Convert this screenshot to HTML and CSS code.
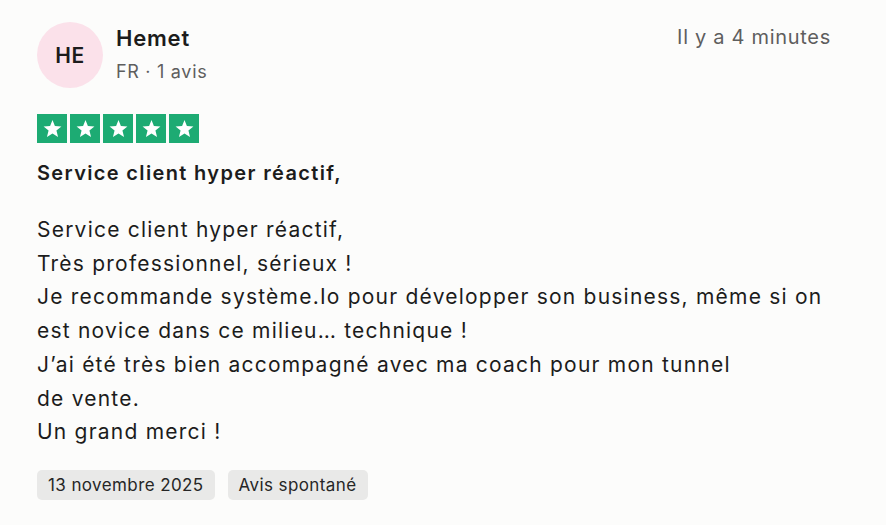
FILE: index.html
```html
<!DOCTYPE html>
<html lang="fr">
<head>
  <meta charset="UTF-8">
  <title>Avis - Hemet</title>
  <link rel="stylesheet" href="styles.css">
</head>
<body>
  <article class="review">
    <header class="review-head">
      <div class="author">
        <div class="avatar">HE</div>
        <div class="author-info">
          <div class="author-name">Hemet</div>
          <div class="author-meta">FR · 1 avis</div>
        </div>
      </div>
      <time class="review-age">Il y a 4 minutes</time>
    </header>

    <div class="stars">
      <span class="star"><svg viewBox="0 0 24 24"><path d="M12 3.2l2.5 6.3 6.8.4-5.2 4.3 1.7 6.6L12 17.1l-5.8 3.7 1.7-6.6-5.2-4.3 6.8-.4z"/></svg></span>
      <span class="star"><svg viewBox="0 0 24 24"><path d="M12 3.2l2.5 6.3 6.8.4-5.2 4.3 1.7 6.6L12 17.1l-5.8 3.7 1.7-6.6-5.2-4.3 6.8-.4z"/></svg></span>
      <span class="star"><svg viewBox="0 0 24 24"><path d="M12 3.2l2.5 6.3 6.8.4-5.2 4.3 1.7 6.6L12 17.1l-5.8 3.7 1.7-6.6-5.2-4.3 6.8-.4z"/></svg></span>
      <span class="star"><svg viewBox="0 0 24 24"><path d="M12 3.2l2.5 6.3 6.8.4-5.2 4.3 1.7 6.6L12 17.1l-5.8 3.7 1.7-6.6-5.2-4.3 6.8-.4z"/></svg></span>
      <span class="star"><svg viewBox="0 0 24 24"><path d="M12 3.2l2.5 6.3 6.8.4-5.2 4.3 1.7 6.6L12 17.1l-5.8 3.7 1.7-6.6-5.2-4.3 6.8-.4z"/></svg></span>
    </div>

    <h2 class="review-title">Service client hyper réactif,</h2>

    <p class="review-text">Service client hyper réactif,<br>Très professionnel, sérieux !<br>Je recommande système.Io pour développer son business, même si on<br>est novice dans ce milieu… technique !<br>J’ai été très bien accompagné avec ma coach pour mon tunnel<br>de vente.<br>Un grand merci !</p>

    <div class="tags">
      <span class="tag">13 novembre 2025</span>
      <span class="tag">Avis spontané</span>
    </div>
  </article>
</body>
</html>
```

FILE: styles.css
```css
body {
  margin: 0;
  background: #fcfcfb;
  font-family: Inter, 'Noto Sans', sans-serif;
  color: #1c1c1c;
}

.review {
  padding: 21px 55px 0 37px;
}

.review-head {
  display: flex;
  justify-content: space-between;
  align-items: flex-start;
}

.author {
  display: flex;
  align-items: center;
  gap: 13px;
}

.avatar {
  width: 66px;
  height: 66px;
  border-radius: 50%;
  background: #fbe1ea;
  display: flex;
  align-items: center;
  justify-content: center;
  font-size: 21px;
  font-weight: 600;
  letter-spacing: 0.5px;
  color: #1c1c1c;
}

.author-name {
  font-size: 22px;
  font-weight: 600;
  letter-spacing: 0.8px;
  line-height: 34px;
}

.author-meta {
  font-size: 18px;
  color: #5e5e5e;
  letter-spacing: 0.7px;
  line-height: 34px;
}

.review-age {
  font-size: 20px;
  color: #5e5e5e;
  letter-spacing: 0.7px;
  line-height: 32px;
}

.stars {
  display: flex;
  gap: 3px;
  margin-top: 25px;
}

.star {
  width: 30px;
  height: 29px;
  background: #1dab73;
  display: flex;
  align-items: center;
  justify-content: center;
}

.star svg {
  width: 23px;
  height: 23px;
  fill: #fff;
}

.review-title {
  font-size: 20px;
  font-weight: 600;
  letter-spacing: 1.35px;
  margin: 13px 0 0;
  line-height: 34px;
}

.review-text {
  font-size: 21px;
  letter-spacing: 1.22px;
  line-height: 33.7px;
  margin: 23px 0 0;
  white-space: nowrap;
}

.tags {
  display: flex;
  gap: 13px;
  margin-top: 21px;
}

.tag {
  background: #e9e9e8;
  border-radius: 5px;
  padding: 0 11px;
  font-size: 17px;
  letter-spacing: 0.4px;
  line-height: 30px;
  color: #262626;
}
```
